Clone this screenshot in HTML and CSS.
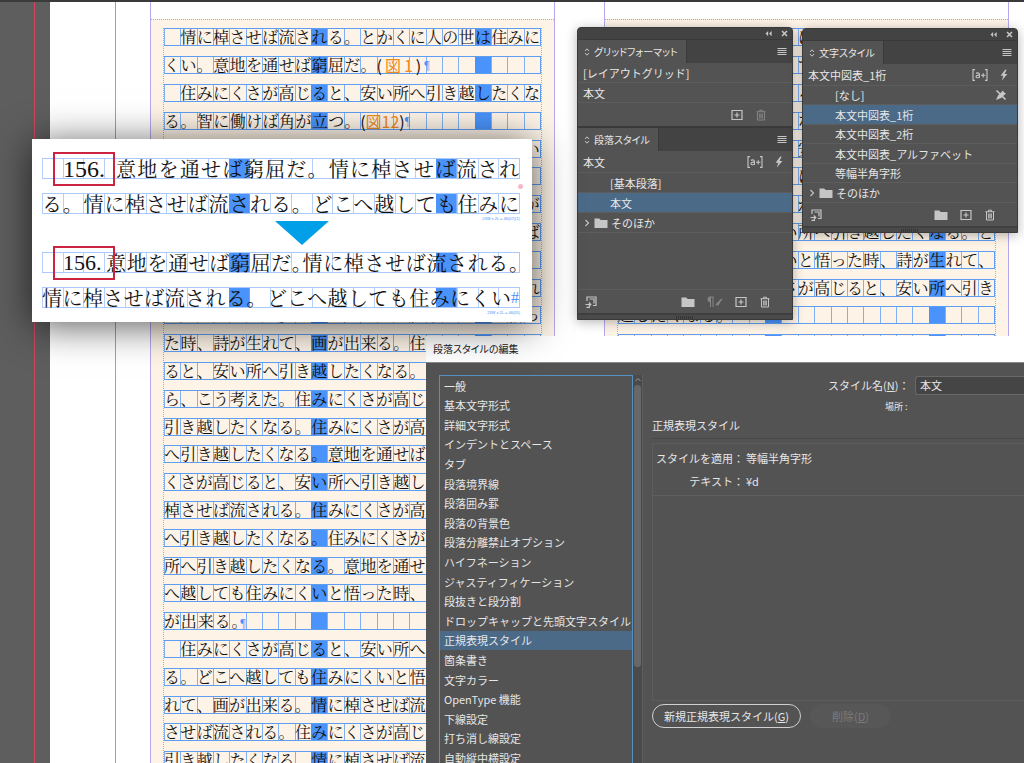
FILE: index.html
```html
<!DOCTYPE html>
<html lang="ja">
<head>
<meta charset="utf-8">
<title>段落スタイルの編集</title>
<link rel="stylesheet" href="styles.css">
</head>
<body>
<svg class="defs" aria-hidden="true">
  <symbol id="i-collapse" viewBox="0 0 8 8"><path d="M3.6 1 .6 4l3 3zM7.6 1l-3 3 3 3z" fill="currentColor"/></symbol>
  <symbol id="i-close" viewBox="0 0 8 8"><path d="m1.2 1.200 5.600 5.600m0-5.600L1.200 6.800" stroke="currentColor" stroke-width="1.800"/></symbol>
  <symbol id="i-menu" viewBox="0 0 10 10"><path d="M.5 1.500h9M.5 3.500h9M.5 5.500h9M.5 7.500h9" stroke="currentColor" stroke-width="1"/></symbol>
  <symbol id="i-updown" viewBox="0 0 6 10"><path d="M1 4 3 1.800 5 4M1 6l2 2.200L5 6" fill="none" stroke="currentColor" stroke-width="1"/></symbol>
  <symbol id="i-new" viewBox="0 0 12 12"><path d="M1 1.500h10v9H1zM6 3.500v5M3.500 6h5" fill="none" stroke="currentColor" stroke-width="1.200"/></symbol>
  <symbol id="i-trash" viewBox="0 0 12 12"><path d="M1.500 2.700h9M4.500 2.500v-1.300h3v1.300M2.500 3v8h7V3M4.700 4.500v5M6 4.500v5M7.300 4.500v5" fill="none" stroke="currentColor" stroke-width="1"/></symbol>
  <symbol id="i-folder" viewBox="0 0 14 12"><path d="M.5 1.500h4.700l1.500 1.500h6.800v8H.5z" fill="currentColor"/></symbol>
  <symbol id="i-import" viewBox="0 0 12 12"><path d="M2 5V1h9v8.500H8M4.500 3H9v4.500M.5 8.500h5M3.800 6.500l2 2-2 2M1.500 11.300H5" fill="none" stroke="currentColor" stroke-width="1.200"/></symbol>
  <symbol id="i-bolt" viewBox="0 0 10 14"><path d="M6.500.5 1 7.800h3.200L2.500 13.500 9 5.800H5.600L8 1z" fill="currentColor"/></symbol>
  <symbol id="i-plus-style" viewBox="0 0 16 12"><path d="M3 .6H1v10.800h2M13 .6h2v10.800h-2M4 4.500c1-1 3.400-.9 3.400.8V9M7.400 6.200C5 6 4 6.700 4 7.700S6.300 9.200 7.400 8M9 6.300h4.400M11.200 4.200v4.300" fill="none" stroke="currentColor" stroke-width="1.100"/></symbol>
  <symbol id="i-clear" viewBox="0 0 16 12"><path d="M3.500 1v10M6 1v10M1 3.300a2 2 0 0 1 2.500-2.300v4.800A2.300 2.300 0 0 1 1 3.300zM3 1h3.500" fill="currentColor" stroke="currentColor"/><path d="m9 9 6-6M10.500 9.300 13 5" stroke="currentColor" stroke-width="1.600"/></symbol>
  <symbol id="i-nopen" viewBox="0 0 12 12"><path d="m1.500 1.500 9 9" stroke="currentColor" stroke-width="1.600"/><path d="m1 11 2-4.500L8 1.500l1 2 2 1L6 9z" fill="currentColor"/></symbol>
  <symbol id="i-chev" viewBox="0 0 6 8"><path d="m1.500 1 3 3-3 3" fill="none" stroke="currentColor" stroke-width="1.100"/></symbol>
</svg>

<main class="desktop">
  <div class="document">
    <div class="pasteboard"></div>
    <div class="page">
      <div class="bleed"></div>
      <section class="frame">
        <div class="frame-body">
          <div class="story">
            <p class="line">　情に棹させば流される。とかくに人の世は住みに</p>
            <p class="line mixed"><span class="run" style="--n:13">くい。意地を通せば窮屈だ。</span><span class="ref ref-wide">(<b>図</b><b>1</b>)<i>¶</i></span></p>
            <p class="line">　住みにくさが高じると、安い所へ引き越したくな</p>
            <p class="line mixed"><span class="run" style="--n:12">る。智に働けば角が立つ。</span><span class="ref">(<b>図12</b>)<i>¶</i></span></p>
            <p class="line mixed"><span class="run" style="--s:22;--n:1">い</span></p>
            <p class="line"></p>
            <p class="line mixed"><span class="run" style="--s:22;--n:1">が</span></p>
            <p class="line mixed"><span class="run" style="--s:22;--n:1">ば</span></p>
            <p class="line"></p>
            <p class="line mixed"><span class="run" style="--s:22;--n:1">れ</span></p>
            <p class="line">き越したくなる。どこへ越しても住みにくいと悟っ</p>
            <p class="line mixed"><span class="run" style="--n:16">た時、詩が生れて、画が出来る。住</span></p>
            <p class="line mixed"><span class="run" style="--n:16">ると、安い所へ引き越したくなる。</span></p>
            <p class="line mixed"><span class="run" style="--n:16">ら、こう考えた。住みにくさが高じ</span></p>
            <p class="line mixed"><span class="run" style="--n:16">引き越したくなる。住みにくさが高</span></p>
            <p class="line mixed"><span class="run" style="--n:16">へ引き越したくなる。意地を通せば</span></p>
            <p class="line mixed"><span class="run" style="--n:16">くさが高じると、安い所へ引き越し</span></p>
            <p class="line mixed"><span class="run" style="--n:16">棹させば流される。住みにくさが高</span></p>
            <p class="line mixed"><span class="run" style="--n:16">へ引き越したくなる。住みにくさが</span></p>
            <p class="line mixed"><span class="run" style="--n:16">所へ引き越したくなる。意地を通せ</span></p>
            <p class="line mixed"><span class="run" style="--n:16">へ越しても住みにくいと悟った時、</span></p>
            <p class="line mixed"><span class="run" style="--n:5">が出来る<span class="half">。</span><i>¶</i></span></p>
            <p class="line mixed"><span class="run" style="--n:16">　住みにくさが高じると、安い所へ</span></p>
            <p class="line mixed"><span class="run" style="--n:16">る。どこへ越しても住みにくいと悟</span></p>
            <p class="line mixed"><span class="run" style="--n:16">れて、画が出来る。情に棹させば流</span></p>
            <p class="line mixed"><span class="run" style="--n:16">させば流される。住みにくさが高じ</span></p>
            <p class="line mixed"><span class="run" style="--n:16">引き越したくなる。情に棹させば流</span></p>
          </div>
        </div>
      </section>
      <section class="frame">
        <div class="frame-body">
          <div class="story">
            <p class="line mixed"><span class="run" style="--s:11;--n:1">に</span></p>
            <p class="line mixed"><span class="run" style="--s:11;--n:1">て</span></p>
            <p class="line mixed"><span class="run" style="--s:11;--n:1">る</span></p>
            <p class="line mixed"><span class="run" style="--s:11;--n:1">な</span></p>
            <p class="line mixed"><span class="run" style="--s:11;--n:1">安</span></p>
            <p class="line mixed"><span class="run" style="--s:11;--n:1">に</span></p>
            <p class="line mixed"><span class="run" style="--s:11;--n:1">が</span></p>
            <p class="line mixed"><span class="run" style="--s:10;--n:13">い所へ引き越したくなる。と</span></p>
            <p class="line mixed"><span class="run" style="--s:10;--n:13">いと悟った時、詩が生れて、</span></p>
            <p class="line mixed"><span class="run" style="--s:10;--n:13">さが高じると、安い所へ引き</span></p>
            <p class="line mixed"><span class="run" style="--n:7">越したくなる。</span></p>
            <p class="line"></p>
          </div>
        </div>
      </section>
    </div>
  </div>

  <section class="dialog">
    <h1 class="dialog-title">段落スタイルの編集</h1>
    <div class="dialog-body">
      <div class="categories">
        <ul class="category-list">
          <li><button>一般</button></li>
          <li><button>基本文字形式</button></li>
          <li><button>詳細文字形式</button></li>
          <li><button>インデントとスペース</button></li>
          <li><button>タブ</button></li>
          <li><button>段落境界線</button></li>
          <li><button>段落囲み罫</button></li>
          <li><button>段落の背景色</button></li>
          <li><button>段落分離禁止オプション</button></li>
          <li><button>ハイフネーション</button></li>
          <li><button>ジャスティフィケーション</button></li>
          <li><button>段抜きと段分割</button></li>
          <li><button>ドロップキャップと先頭文字スタイル</button></li>
          <li><button class="selected">正規表現スタイル</button></li>
          <li><button>箇条書き</button></li>
          <li><button>文字カラー</button></li>
          <li><button>OpenType 機能</button></li>
          <li><button>下線設定</button></li>
          <li><button>打ち消し線設定</button></li>
          <li><button>自動縦中横設定</button></li>
        </ul>
        <div class="scrollbar"><svg viewBox="0 0 8 6"><path d="m1.500 4 2.500-2.500L6.500 4" fill="none" stroke="#999"/></svg><div class="thumb"></div></div>
      </div>
      <div class="settings">
        <div class="name-row"><label for="style-name">スタイル名(<u>N</u>)：</label><input id="style-name" type="text" value="本文"></div>
        <div class="place">場所 :</div>
        <h2>正規表現スタイル</h2>
        <div class="grep-box">
          <dl>
            <dt>スタイルを適用：</dt><dd>等幅半角字形</dd>
            <dt>テキスト：</dt><dd>¥d</dd>
          </dl>
        </div>
        <div class="actions">
          <button class="pill">新規正規表現スタイル(<u>G</u>)</button>
          <button class="pill pill-off" disabled>削除(<u>D</u>)</button>
        </div>
      </div>
    </div>
  </section>

  <section class="panel panel-para">
    <div class="grab"><svg><use href="#i-collapse"/></svg><svg><use href="#i-close"/></svg></div>
    <div class="tabs"><button class="tab"><svg><use href="#i-updown"/></svg>グリッドフォーマット</button><svg class="menu"><use href="#i-menu"/></svg></div>
    <button class="row">[レイアウトグリッド]</button>
    <button class="row">本文</button>
    <div class="tools tools-grid"><svg><use href="#i-new"/></svg><svg class="dim"><use href="#i-trash"/></svg></div>
    <div class="tabs tabs-second"><button class="tab"><svg><use href="#i-updown"/></svg>段落スタイル</button><svg class="menu"><use href="#i-menu"/></svg></div>
    <div class="current"><span>本文</span><svg class="wide"><use href="#i-plus-style"/></svg><svg><use href="#i-bolt"/></svg></div>
    <button class="row indent">[基本段落]</button>
    <button class="row indent selected">本文</button>
    <button class="row group"><svg class="chev"><use href="#i-chev"/></svg><svg class="folder"><use href="#i-folder"/></svg>そのほか</button>
    <div class="space"></div>
    <div class="tools"><svg class="first"><use href="#i-import"/></svg><svg class="folder"><use href="#i-folder"/></svg><svg class="wide dim"><use href="#i-clear"/></svg><svg><use href="#i-new"/></svg><svg><use href="#i-trash"/></svg></div>
    <div class="grip"></div>
  </section>

  <section class="panel panel-char">
    <div class="grab"><svg><use href="#i-collapse"/></svg><svg><use href="#i-close"/></svg></div>
    <div class="tabs"><button class="tab"><svg><use href="#i-updown"/></svg>文字スタイル</button><svg class="menu"><use href="#i-menu"/></svg></div>
    <div class="current"><span>本文中図表_1桁</span><svg class="wide"><use href="#i-plus-style"/></svg><svg><use href="#i-bolt"/></svg></div>
    <button class="row indent">[なし]<svg class="end"><use href="#i-nopen"/></svg></button>
    <button class="row indent selected">本文中図表_1桁</button>
    <button class="row indent">本文中図表_2桁</button>
    <button class="row indent">本文中図表_アルファベット</button>
    <button class="row indent">等幅半角字形</button>
    <button class="row group"><svg class="chev"><use href="#i-chev"/></svg><svg class="folder"><use href="#i-folder"/></svg>そのほか</button>
    <div class="tools"><svg class="first"><use href="#i-import"/></svg><svg class="folder"><use href="#i-folder"/></svg><svg><use href="#i-new"/></svg><svg><use href="#i-trash"/></svg></div>
    <div class="grip"></div>
  </section>

  <section class="callout">
    <div class="sample">
      <p class="line mixed"><span class="num num-wide">156.</span><span class="fill">意地を通せば窮屈だ。情に棹させば流され</span></p>
      <p class="line">る。情に棹させば流される。どこへ越しても住みに</p>
      <small>23W x 2L = 46(47)(1)</small>
      <span class="mark"></span>
      <span class="overset"></span>
    </div>
    <svg class="arrow" viewBox="0 0 54 24"><path d="M0 0h54L27 24z" fill="#009fe8"/></svg>
    <div class="sample">
      <p class="line mixed"><span class="num">156.</span><span class="fill">意地を通せば窮屈だ<span class="half">。</span>情に棹させば流される<span class="half">。</span></span></p>
      <p class="line mixed"><span class="fill">情に棹させば流される。どこへ越しても住みにくい</span><i>#</i></p>
      <small>23W x 2L = 46(45)</small>
      <span class="mark"></span>
    </div>
  </section>
</main>
</body>
</html>
```
FILE: styles.css
```css
* { box-sizing: border-box; }

body {
  margin: 0;
  background: #fff;
  color: #e6e6e6;
  font: 11px/20px "Noto Sans CJK JP", sans-serif;
  text-spacing-trim: space-all;
}

button {
  border: 0;
  padding: 0;
  background: none;
  color: inherit;
  font: inherit;
  text-align: left;
  white-space: nowrap;
}

p, h1, h2, ul, dl, dd { margin: 0; padding: 0; font-weight: normal; }
ul { list-style: none; }
.defs { display: none; }

.desktop {
  position: relative;
  height: 100vh;
  overflow: hidden;
}

/* document window */
.document {
  display: flex;
  height: 100%;
  border-top: 2px solid #3a3a3a;
  background-color: #fff;
}

.pasteboard {
  flex: none;
  width: 50px;
  background: linear-gradient(#d4465f, #d4465f) 34px 0 / 1px 100% no-repeat #5e5e5e;
}

.page {
  flex: 1;
  display: grid;
  grid-template-columns: 66px 439px 1fr;
  min-height: 0;
}

.bleed { border-right: 1px solid #00e6e6; }

.frame {
  width: 405px;
  padding-top: 17px;
  border: solid #b5a8ee;
  border-width: 0 1px;
}

.frame:nth-of-type(1) { margin-left: 34px; }
.frame:nth-of-type(2) { margin-left: 49px; }

.frame-body {
  padding: 8px 12px 0;
  border-top: 1px dotted #aaa8c0;
  background: #fdf3e7;
}

.story {
  display: grid;
  grid-template-columns: minmax(0, 1fr);
  grid-auto-rows: 28px 28px 28px 28px 27px;
  border: dotted #9ab2e0;
  border-width: 0 1px;
}

.line {
  height: 18px;
  border: solid #5f9df2;
  border-width: 1px 1px 1px 0;
  color: #111;
  font: 16px/16px "Noto Serif CJK JP", "Noto Sans CJK JP", serif;
  white-space: nowrap;
  text-align: justify;
  text-align-last: justify;
  background:
    linear-gradient(#4a93fb, #4a93fb) calc(900% / 22) 0 / calc(100% / 23) 100% no-repeat,
    linear-gradient(#4a93fb, #4a93fb) calc(1900% / 22) 0 / calc(100% / 23) 100% no-repeat,
    repeating-linear-gradient(90deg, #80b1f4 0 1px, transparent 1px calc(100% / 23));
}

.mixed { display: flex; }

/* --s: first cell, --n: cells covered */
.run {
  flex: none;
  width: calc(100% * var(--n) / 23);
  margin-left: calc(100% * var(--s, 0) / 23);
}

.half { font-feature-settings: "halt"; }

.ref {
  display: flex;
  font-family: "Noto Sans CJK JP", sans-serif;
  text-align-last: left;
}

.ref b { color: #ee8a1d; font-weight: normal; }
.line i { color: #4a93fb; font: 12px/16px "Liberation Serif", serif; }
.ref-wide { gap: 3px; }

/* enlarged sample */
.callout {
  position: absolute;
  left: 32px;
  top: 139px;
  width: 500px;
  padding: 19px 12px 14px 10px;
  background: #fff;
  box-shadow: 0 4px 36px rgba(0, 0, 0, .65);
}

.sample { position: relative; display: grid; row-gap: 14px; }

.sample .line {
  height: 21px;
  border-color: #a9c9fa;
  font-size: 20px;
  line-height: 19px;
  background:
    linear-gradient(#4a93fb, #4a93fb) calc(900% / 22) 0 / calc(100% / 23) 100% no-repeat,
    linear-gradient(#4a93fb, #4a93fb) calc(1900% / 22) 0 / calc(100% / 23) 100% no-repeat,
    repeating-linear-gradient(90deg, #b4cff8 0 1px, transparent 1px calc(100% / 23));
}

.fill { flex: 1; }

.num {
  width: 64px;
  padding-left: 21px;
  font: 22px/20px "Liberation Serif", serif;
  text-align-last: left;
}

.num-wide { width: 74px; font-size: 24px; }
.callout i { font-size: 16px; line-height: 20px; }

.sample small {
  position: absolute;
  right: 0;
  bottom: -8px;
  color: #4a93fb;
  font: 4px/6px "Liberation Sans", sans-serif;
}

.mark {
  position: absolute;
  left: 11px;
  top: -6px;
  width: 62px;
  height: 34px;
  border: 2px solid #cc2440;
}

.overset {
  position: absolute;
  right: -3px;
  top: 26px;
  width: 5px;
  height: 5px;
  border-radius: 3px;
  background: #f6b8c6;
}

.arrow {
  display: block;
  width: 54px;
  height: 24px;
  margin: 7px 0 7px 233px;
}

/* floating panels */
.panel {
  position: absolute;
  display: flex;
  flex-direction: column;
  width: 216px;
  border: 1px solid #3a3a3a;
  border-radius: 4px 4px 0 0;
  background: #535353;
  box-shadow: 0 2px 12px rgba(0, 0, 0, .3);
  overflow: hidden;
}

.panel-para { left: 577px; top: 27px; }
.panel-char { left: 802px; top: 28px; }

.panel svg { flex: none; width: 12px; height: 12px; color: #c6c6c6; }
.panel svg.wide { width: 16px; }
.panel svg.folder { width: 14px; }
.panel svg.dim { color: #858585; }

.grab {
  display: flex;
  justify-content: flex-end;
  gap: 9px;
  align-items: center;
  height: 11px;
  padding-right: 4px;
  background: #434343;
}

.panel .grab svg { width: 7px; height: 7px; }

.tabs {
  display: flex;
  justify-content: space-between;
  align-items: center;
  height: 24px;
  padding-right: 5px;
  border-top: 1px solid #3a3a3a;
  background: #434343;
}

.tabs-second { height: 25px; border-top: 2px solid #3a3a3a; }

.tab {
  display: flex;
  align-items: center;
  gap: 4px;
  height: 100%;
  padding: 0 8px 0 6px;
  border-right: 1px solid #3a3a3a;
  background: #535353;
  font-size: 10px;
  font-feature-settings: "palt";
}

.panel .tab svg { width: 6px; height: 10px; }
.panel .menu { width: 10px; height: 10px; }

.row {
  display: flex;
  align-items: center;
  height: 20px;
  padding: 0 10px 0 5px;
  border-bottom: 1px solid #5d5d5d;
}

.panel-char .row:nth-of-type(odd) { height: 19px; }

.indent { padding-left: 32px; }
.selected { background: #4b6a88; }
.end { margin-left: auto; }

.panel .group { gap: 3px; }
.panel .chev { width: 6px; height: 8px; margin: 0 1px; }

.current {
  display: flex;
  align-items: center;
  gap: 10px;
  height: 22px;
  padding: 0 7px 0 5px;
  border-bottom: 1px solid #5d5d5d;
}

.current span { flex: 1; }
.space { height: 57px; border-bottom: 1px solid #5d5d5d; }

.tools {
  display: flex;
  justify-content: flex-end;
  align-items: center;
  gap: 12px;
  height: 23px;
  padding: 0 21px 0 7px;
}

.tools-grid { padding-right: 25px; }
.tools .first { margin-right: auto; }

.grip {
  height: 6px;
  border-top: 2px solid #404040;
  background: repeating-linear-gradient(90deg, #353535 0 1px, transparent 1px 2px) center / 18px 3px no-repeat #4a4a4a;
}

/* style options dialog */
.dialog {
  position: absolute;
  left: 426px;
  right: 0;
  top: 336px;
  bottom: 0;
  display: flex;
  flex-direction: column;
  background: #535353;
}

.dialog-title {
  height: 27px;
  padding-left: 7px;
  border-bottom: 1px solid #8a8a8a;
  background: #fff;
  color: #222;
  font-size: 10px;
  line-height: 26px;
  font-feature-settings: "palt";
}

.dialog-body {
  flex: 1;
  display: flex;
  min-height: 0;
  padding: 12px 0 0 13px;
}

.categories { display: flex; flex: none; width: 204px; }

.category-list {
  flex: 1;
  display: grid;
  grid-auto-rows: 20px 19px 20px 19px 20px;
  border: 1px solid #5590c4;
  border-bottom: 0;
}

.category-list button {
  display: block;
  width: 100%;
  height: 100%;
  padding: 0 0 1px 4px;
  line-height: 18px;
}

.scrollbar {
  width: 10px;
  padding: 0 1px;
  border-right: 1px solid #5e5e5e;
  background: #4a4a4a;
}

.scrollbar svg { display: block; width: 8px; height: 10px; }
.thumb { height: 282px; border-radius: 4px; background: #686868; }

.settings { flex: 1; padding-left: 9px; }
.name-row { display: flex; align-items: center; margin-left: 176px; }
.name-row label { flex: none; width: 87px; }

.name-row input {
  flex: 1;
  min-width: 0;
  height: 19px;
  padding: 0 4px;
  border: 1px solid #686868;
  border-right: 0;
  border-radius: 3px 0 0 3px;
  background: #454545;
  color: inherit;
  font: inherit;
}

.place { margin-left: 233px; font-size: 9px; line-height: 24px; }

h2 {
  height: 20px;
  border-bottom: 1px solid #484848;
  font-size: 11px;
  line-height: 12px;
}

.grep-box {
  height: 258px;
  margin-top: 4px;
  border: solid #5d5d5d;
  border-width: 1px 0 1px 1px;
}

dl {
  display: grid;
  grid-template-columns: 88px 1fr;
  column-gap: 2px;
  padding: 3px 0 2px 3px;
  border-bottom: 1px solid #5f5f5f;
  line-height: 23px;
}

dt { text-align: right; }

.actions { display: flex; gap: 9px; margin-top: 3px; }

.pill {
  height: 24px;
  padding: 0 11px;
  border: 1px solid #d0d0d0;
  border-radius: 12px;
}

.pill-off { padding: 0 21px; border-color: #575757; background: #575757; color: #7b7b7b; }
```
